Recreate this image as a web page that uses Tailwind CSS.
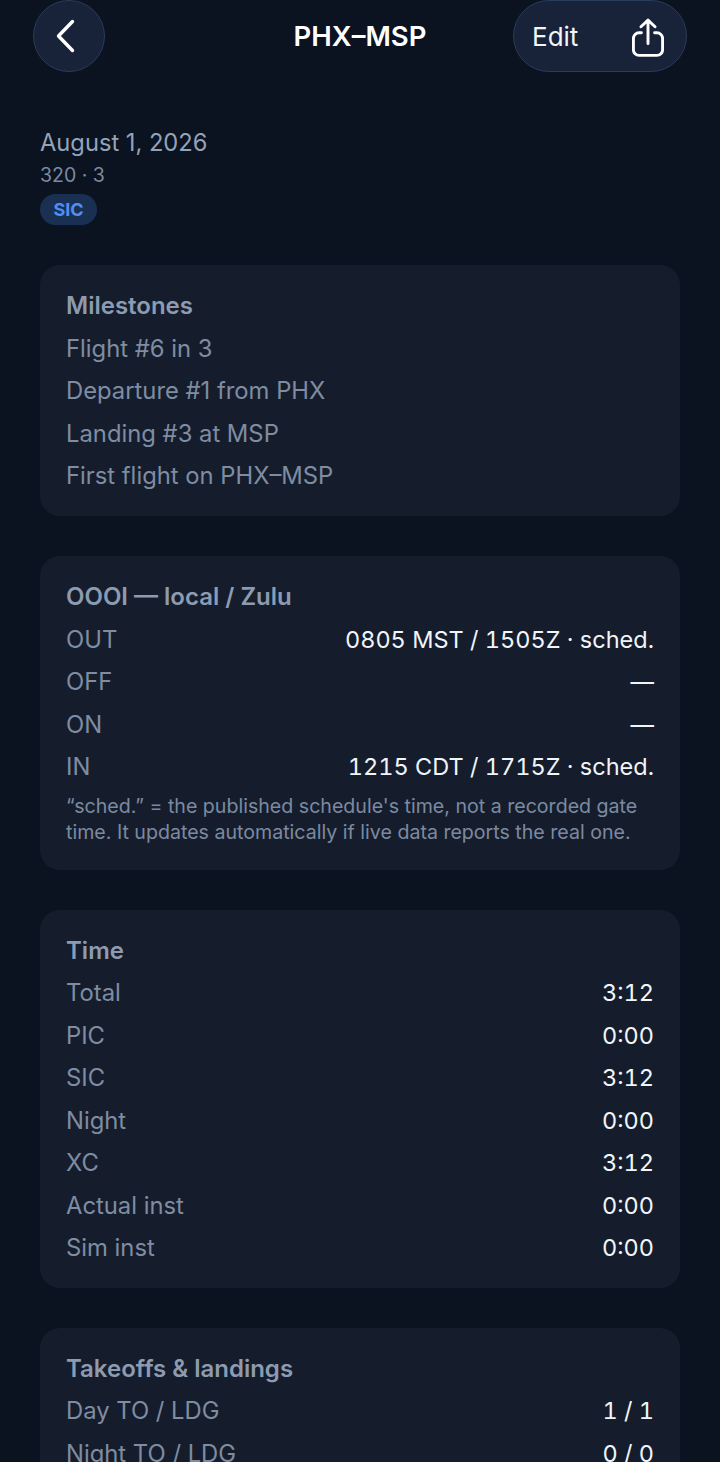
<!DOCTYPE html>
<html lang="en">
<head>
<meta charset="utf-8">
<script src="https://cdn.jsdelivr.net/npm/@tailwindcss/browser@4"></script>
<title>PHX–MSP</title>
</head>
<body class="bg-[#0b1220] font-['Inter',sans-serif] text-white">
<div class="h-[1462px] w-[720px] overflow-hidden">
  <header class="grid h-[72px] grid-cols-[1fr_auto_1fr] items-center px-[33px]">
    <button class="flex h-[72px] w-[72px] items-center justify-center rounded-full border border-[#2a3c5c] bg-[#18233a]">
      <svg width="24" height="34" viewBox="0 0 24 34" fill="none" stroke="#ffffff" stroke-width="3.4" stroke-linecap="round" stroke-linejoin="round" class="-translate-x-[3px]"><path d="M18.5 2.5 4.5 17l14 14.5"/></svg>
    </button>
    <h1 class="pt-[1px] text-[27.5px] font-semibold leading-none text-white">PHX–MSP</h1>
    <div class="flex justify-end">
      <div class="flex h-[72px] w-[174px] items-center justify-between rounded-full border border-[#2a3c5c] bg-[#18233a] pl-[18px] pr-[22px]">
        <span class="pt-[1px] text-[26px] leading-none text-[#f1f5f9]">Edit</span>
        <svg width="32" height="40" viewBox="0 0 34 42" fill="none" stroke="#ffffff" stroke-width="3.1" stroke-linecap="round" stroke-linejoin="round" class="translate-y-[2px]"><path d="M10 15.5H7.5a6 6 0 0 0-6 6v12a6 6 0 0 0 6 6h19a6 6 0 0 0 6-6v-12a6 6 0 0 0-6-6H24"/><path d="M17 27V2M9.5 9 17 2l7.5 7"/></svg>
      </div>
    </div>
  </header>

  <section class="px-10 pt-[56px]">
    <p class="text-[23.7px] leading-[30px] text-[#94a3b8]">August 1, 2026</p>
    <p class="mt-[5px] text-[19.5px] leading-[24px] text-[#7c8aa0]">320 · 3</p>
    <span class="mt-[7px] flex h-[31px] w-[57px] items-center justify-center rounded-full bg-[#1a3053] text-[18px] font-bold text-[#4f8ef5]">SIC</span>
  </section>

  <div class="mt-10 flex flex-col gap-10 px-10">
    <section class="rounded-[20px] bg-[#151d2d] px-[26px] pb-[18.5px] pt-[20px] text-[23.8px] leading-[42.5px] text-[#7f8ca1]">
      <h2 class="text-[24px] font-semibold text-[#8d9bb0]">Milestones</h2>
      <p>Flight #6 in 3</p>
      <p>Departure #1 from PHX</p>
      <p>Landing #3 at MSP</p>
      <p>First flight on PHX–MSP</p>
    </section>

    <section class="rounded-[20px] bg-[#151d2d] px-[26px] pb-[25px] pt-[20px] text-[23.8px] leading-[42.5px] text-[#7f8ca1]">
      <h2 class="text-[24px] font-semibold text-[#8d9bb0]">OOOI — local / Zulu</h2>
      <div class="flex justify-between"><span>OUT</span><span class="text-[23.5px] text-[#f1f5f9] tabular-nums">0805 MST / 1505Z · sched.</span></div>
      <div class="flex justify-between"><span>OFF</span><span class="text-[23.5px] text-[#f1f5f9]">—</span></div>
      <div class="flex justify-between"><span>ON</span><span class="text-[23.5px] text-[#f1f5f9]">—</span></div>
      <div class="flex justify-between"><span>IN</span><span class="text-[23.5px] text-[#f1f5f9] tabular-nums">1215 CDT / 1715Z · sched.</span></div>
      <p class="mt-[4.5px] text-[19.6px] leading-[26px] text-[#7c8aa0]">“sched.” = the published schedule's time, not a recorded gate time. It updates automatically if live data reports the real one.</p>
    </section>

    <section class="rounded-[20px] bg-[#151d2d] px-[26px] pb-[18.5px] pt-[19.5px] text-[23.8px] leading-[42.5px] text-[#7f8ca1]">
      <h2 class="text-[24px] font-semibold text-[#8d9bb0]">Time</h2>
      <div class="flex justify-between"><span>Total</span><span class="text-[23.5px] text-[#f1f5f9] tabular-nums">3:12</span></div>
      <div class="flex justify-between"><span>PIC</span><span class="text-[23.5px] text-[#f1f5f9] tabular-nums">0:00</span></div>
      <div class="flex justify-between"><span>SIC</span><span class="text-[23.5px] text-[#f1f5f9] tabular-nums">3:12</span></div>
      <div class="flex justify-between"><span>Night</span><span class="text-[23.5px] text-[#f1f5f9] tabular-nums">0:00</span></div>
      <div class="flex justify-between"><span>XC</span><span class="text-[23.5px] text-[#f1f5f9] tabular-nums">3:12</span></div>
      <div class="flex justify-between"><span>Actual inst</span><span class="text-[23.5px] text-[#f1f5f9] tabular-nums">0:00</span></div>
      <div class="flex justify-between"><span>Sim inst</span><span class="text-[23.5px] text-[#f1f5f9] tabular-nums">0:00</span></div>
    </section>

    <section class="rounded-[20px] bg-[#151d2d] px-[26px] pb-[18px] pt-[19.5px] text-[23.8px] leading-[42.5px] text-[#7f8ca1]">
      <h2 class="text-[24px] font-semibold text-[#8d9bb0]">Takeoffs &amp; landings</h2>
      <div class="flex justify-between"><span>Day TO / LDG</span><span class="text-[23.5px] text-[#f1f5f9] tabular-nums">1 / 1</span></div>
      <div class="flex justify-between"><span>Night TO / LDG</span><span class="text-[23.5px] text-[#f1f5f9] tabular-nums">0 / 0</span></div>
    </section>
  </div>
</div>
</body>
</html>
